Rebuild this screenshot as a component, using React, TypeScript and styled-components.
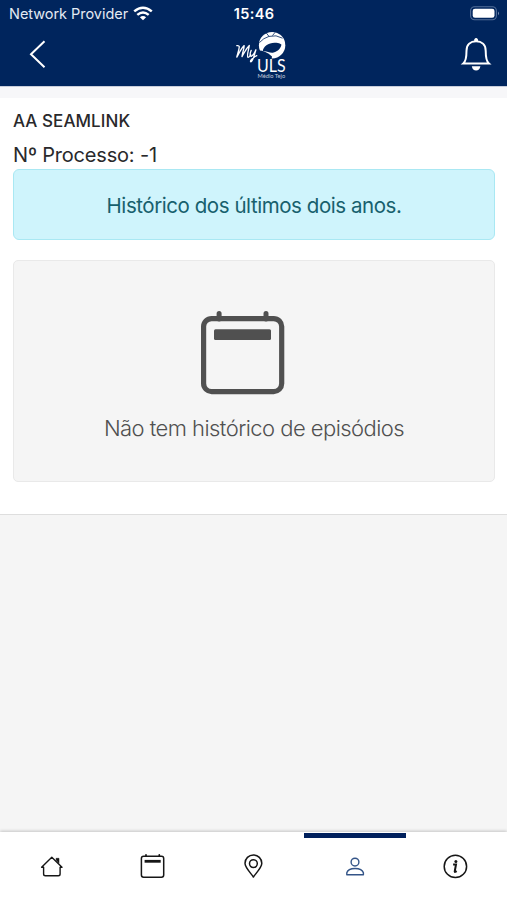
import React from "react";
import styled, { createGlobalStyle } from "styled-components";

const GlobalStyle = createGlobalStyle`
  * { box-sizing: border-box; }
  body { margin: 0; background: #f5f5f5; font-family: Inter, "Liberation Sans", sans-serif; }
`;

const Screen = styled.div`
  display: flex;
  flex-direction: column;
  width: 507px;
  height: 900px;
  overflow: hidden;
  background: #f5f5f5;
`;

const Header = styled.header`
  flex: none;
  height: 86px;
  background: #00255d;
  color: #fff;
`;

const StatusBar = styled.div`
  display: grid;
  grid-template-columns: 1fr auto 1fr;
  align-items: center;
  height: 27px;
  padding: 0 7px 0 9px;
`;

const Carrier = styled.div`
  display: flex;
  align-items: center;
  gap: 5px;
  font-size: 14.5px;
  letter-spacing: -0.04px;
  color: #e4eaf3;
  white-space: nowrap;
`;

const Clock = styled.div`
  margin-right: 1px;
  font-size: 14.5px;
  font-weight: 600;
  letter-spacing: 0.35px;
`;

const BatterySlot = styled.div`
  display: flex;
  justify-content: flex-end;
`;

const NavBar = styled.div`
  display: flex;
  align-items: flex-start;
  justify-content: space-between;
  height: 59px;
  padding: 1px 15px 0 28px;
`;

const NavButton = styled.button`
  display: flex;
  margin: 8px 0 0;
  padding: 0;
  border: 0;
  background: none;
  color: inherit;
`;

const Strip = styled.div`
  flex: none;
  height: 12px;
  border-top: 1px solid #c8cedb;
  background: #f7f7f9;
`;

const Content = styled.main`
  flex: none;
  height: 417px;
  padding: 12px 12px 0 13px;
  border-bottom: 1px solid #dedede;
  background: #fff;
`;

const PatientName = styled.div`
  height: 22px;
  line-height: 22px;
  font-size: 17px;
  font-weight: 500;
  letter-spacing: 0.06px;
  color: #29292b;
`;

const ProcessNumber = styled.div`
  height: 37px;
  padding-top: 11px;
  line-height: 24px;
  font-size: 20px;
  letter-spacing: -0.18px;
  color: #29292b;
`;

const Notice = styled.div`
  display: flex;
  align-items: center;
  justify-content: center;
  height: 71px;
  padding-top: 2px;
  border: 1px solid #a9e8f3;
  border-radius: 6px;
  background: #cff4fc;
  color: #17606d;
  font-size: 20.5px;
  letter-spacing: -0.44px;
`;

const EmptyCard = styled.section`
  display: flex;
  flex-direction: column;
  align-items: center;
  height: 222px;
  margin-top: 20px;
  padding: 49px 23px 0 0;
  border: 1px solid #e9e9e9;
  border-radius: 5px;
  background: #f5f5f5;
`;

const EmptyText = styled.div`
  margin: 19px -23px 0 0;
  line-height: 28px;
  font-size: 22px;
  font-weight: 300;
  letter-spacing: -0.55px;
  color: #505050;
  white-space: nowrap;
`;

const Spacer = styled.div`
  flex: 1;
`;

const TabBar = styled.nav`
  display: grid;
  grid-template-columns: repeat(5, 1fr);
  flex: none;
  height: 68px;
  background: #fff;
  box-shadow: 0 -1px 3px rgba(0, 0, 0, 0.2);
`;

const Tab = styled.button<{ $active?: boolean }>`
  display: flex;
  align-items: flex-start;
  justify-content: center;
  margin-top: 1px;
  padding: ${(p) => (p.$active ? 15 : 20)}px 0 0;
  border: 0;
  border-top: ${(p) => (p.$active ? "5px solid #00205c" : "0")};
  background: none;
  color: ${(p) => (p.$active ? "#345588" : "#161616")};
`;

const WifiIcon = () => (
  <svg width="20" height="15" viewBox="0 0 20 15" fill="none" stroke="#fff" strokeWidth="2.5">
    <path d="M1.2 5.4Q10-2 18.8 5.4M4.3 8.9Q10 4.2 15.7 8.9" />
    <path d="M6.9 11.3Q10 8.8 13.1 11.3L10 14.2Z" fill="#fff" stroke="none" />
  </svg>
);

const BatteryIcon = () => (
  <svg width="30" height="15" viewBox="0 0 30 15">
    <rect x=".6" y=".8" width="25.8" height="13" rx="4" fill="none" stroke="#536f99" strokeWidth="1.1" />
    <rect x="2.7" y="2.8" width="21.8" height="9" rx="2.3" fill="#fff" />
    <path d="M28 5.4Q30 7.3 28 9.2Z" fill="#7d91b2" />
  </svg>
);

const BackIcon = () => (
  <svg width="19" height="36" viewBox="0 0 19 36" fill="none" stroke="#fff" strokeWidth="2">
    <path d="M16.5 5.2L3 18.2L16.5 31.2" />
  </svg>
);

const BellIcon = () => (
  <svg width="32" height="36" viewBox="0 0 32 36" fill="none" stroke="#fff" strokeWidth="2">
    <path d="M3.3 27.6Q6.5 24.8 6.5 14.8C6.5 8.8 10.5 5.3 16.1 5.3S25.7 8.8 25.7 14.8Q25.7 24.8 28.9 27.6Z" />
    <path d="M14.2 5V3.5Q16.1.6 18 3.5V5ZM11.8 30.2H20.4Q19.5 34.5 16.1 34.5T11.8 30.2Z" fill="#fff" stroke="none" />
  </svg>
);

const Logo = () => (
  <svg width="56" height="54" viewBox="0 0 56 54" fill="none">
    <g stroke="#fff" strokeWidth="1.3" strokeLinecap="round" strokeLinejoin="round">
      <path d="M3.8 17.7Q6 17.3 6.3 18.7C6.1 22 4.3 26.5 3.8 29.2C6 25.5 8.4 20.1 11.2 17.6C11.2 21 9.2 25.3 9 28.6C11.4 24.4 13.6 20 16.3 17.5C15.8 21.7 13.3 28.2 15 29.4Q16.4 29.6 17.6 26.7" />
      <path d="M18.2 22.3C16.5 26.6 17.1 28.8 18.5 28.1C20.6 27.1 21.8 24.5 22.9 21.8C21.4 26.5 20.2 33.3 17.9 33.8C16.5 33.5 19 29.9 23.8 27.7" />
    </g>
    <circle cx="39.1" cy="17.2" r="13.2" fill="#fff" />
    <path d="M26.4 14.6Q30.4 10 36 8.4L33 4.6M36 8.4Q43.2 6.4 49.6 10.2M42.2 4.2Q41 5.8 39.4 7.6" stroke="#00255d" strokeWidth=".8" />
    <path d="M29.8 23.4C30.2 17.2 39.5 12.2 48.4 16.4C48.2 19.6 44.8 23.5 40.6 24.5C36.8 25.6 33.2 22.2 29.8 23.4Z" fill="#00255d" />
    <path d="M25.5 22.6Q32.5 22.6 39 28.4L38.6 31H28Z" fill="#00255d" />
    <text fill="#fff" fontSize="17" fontFamily="Lato, sans-serif">
      <tspan x="24" y="43.6" textLength="28.6" lengthAdjust="spacingAndGlyphs">ULS</tspan>
      <tspan x="24.4" y="50.3" textLength="27.8" lengthAdjust="spacingAndGlyphs" fill="#c1cbdc" fontSize="5.3">Médio Tejo</tspan>
    </text>
  </svg>
);

const LogoSlot = styled.div`
  display: flex;
  margin-left: 15px;
`;

const CalendarLarge = () => (
  <svg width="84" height="85" viewBox="0 0 84 85" fill="none" stroke="#505050">
    <rect x="2.6" y="8.6" width="78.1" height="73" rx="8" strokeWidth="5.2" />
    <path d="M18.1 9V3.6M65 9V3.6" strokeWidth="5" strokeLinecap="round" />
    <rect x="13" y="19.2" width="57" height="10.7" rx="1.5" fill="#505050" stroke="none" />
  </svg>
);

const CalendarSmall = () => (
  <svg width="26" height="26" viewBox="0 0 26 26" fill="none" stroke="currentColor">
    <rect x="2.4" y="3.3" width="22.3" height="20.9" rx="2.2" strokeWidth="1.5" />
    <path d="M7 3V1.8M20.3 3V1.8" strokeWidth="1.7" strokeLinecap="round" />
    <path d="M5.6 8.3H21.7" strokeWidth="2.8" />
  </svg>
);

const HomeIcon = () => (
  <svg width="26" height="26" viewBox="0 0 26 26" fill="none" stroke="currentColor" strokeWidth="1.4" strokeLinejoin="round">
    <path d="M3.6 14.2L13.8 4.3L24 14.2H22.1V21Q22.1 22.8 20.3 22.8H7.4Q5.6 22.8 5.6 21V14.2Z" />
    <path d="M18.1 7V5.3H21V10.2Z" fill="currentColor" strokeWidth=".5" />
  </svg>
);

const PinIcon = () => (
  <svg width="26" height="26" viewBox="0 0 26 26" fill="none" stroke="currentColor" strokeWidth="1.5" strokeLinejoin="round">
    <path d="M13.4 24C11.2 20.5 5 14.8 5 10.3A8.4 8.4 0 0 1 21.8 10.3C21.8 14.8 15.6 20.5 13.4 24Z" />
    <circle cx="13.4" cy="10.6" r="3.9" />
  </svg>
);

const PersonIcon = () => (
  <svg width="26" height="26" viewBox="0 0 26 26" fill="none" stroke="currentColor" strokeWidth="1.4" strokeLinejoin="round">
    <circle cx="13" cy="9.1" r="3.9" />
    <path d="M4.8 21.7V19.8C6.3 14 19.7 14 21.4 19.8V21.7Z" />
  </svg>
);

const InfoIcon = () => (
  <svg width="26" height="26" viewBox="0 0 26 26" fill="none" stroke="currentColor">
    <circle cx="12.4" cy="13.4" r="11.2" strokeWidth="1.5" />
    <path d="M10.1 11.4H13L11.7 18.5Q11.8 19.4 13.7 18.2" strokeWidth="2" />
    <circle cx="12.9" cy="8.4" r="1.5" fill="currentColor" stroke="none" />
  </svg>
);

const tabs = [
  { label: "Início", Icon: HomeIcon },
  { label: "Agenda", Icon: CalendarSmall },
  { label: "Localização", Icon: PinIcon },
  { label: "Perfil", Icon: PersonIcon, active: true },
  { label: "Informações", Icon: InfoIcon },
];

export default function App() {
  return (
    <Screen>
      <GlobalStyle />
      <Header>
        <StatusBar>
          <Carrier>Network Provider <WifiIcon /></Carrier>
          <Clock>15:46</Clock>
          <BatterySlot><BatteryIcon /></BatterySlot>
        </StatusBar>
        <NavBar>
          <NavButton aria-label="Voltar"><BackIcon /></NavButton>
          <LogoSlot><Logo /></LogoSlot>
          <NavButton aria-label="Notificações"><BellIcon /></NavButton>
        </NavBar>
      </Header>
      <Strip />
      <Content>
        <PatientName>AA SEAMLINK</PatientName>
        <ProcessNumber>Nº Processo: -1</ProcessNumber>
        <Notice>Histórico dos últimos dois anos.</Notice>
        <EmptyCard>
          <CalendarLarge />
          <EmptyText>Não tem histórico de episódios</EmptyText>
        </EmptyCard>
      </Content>
      <Spacer />
      <TabBar>
        {tabs.map(({ label, Icon, active }) => (
          <Tab key={label} $active={active} aria-label={label}><Icon /></Tab>
        ))}
      </TabBar>
    </Screen>
  );
}
